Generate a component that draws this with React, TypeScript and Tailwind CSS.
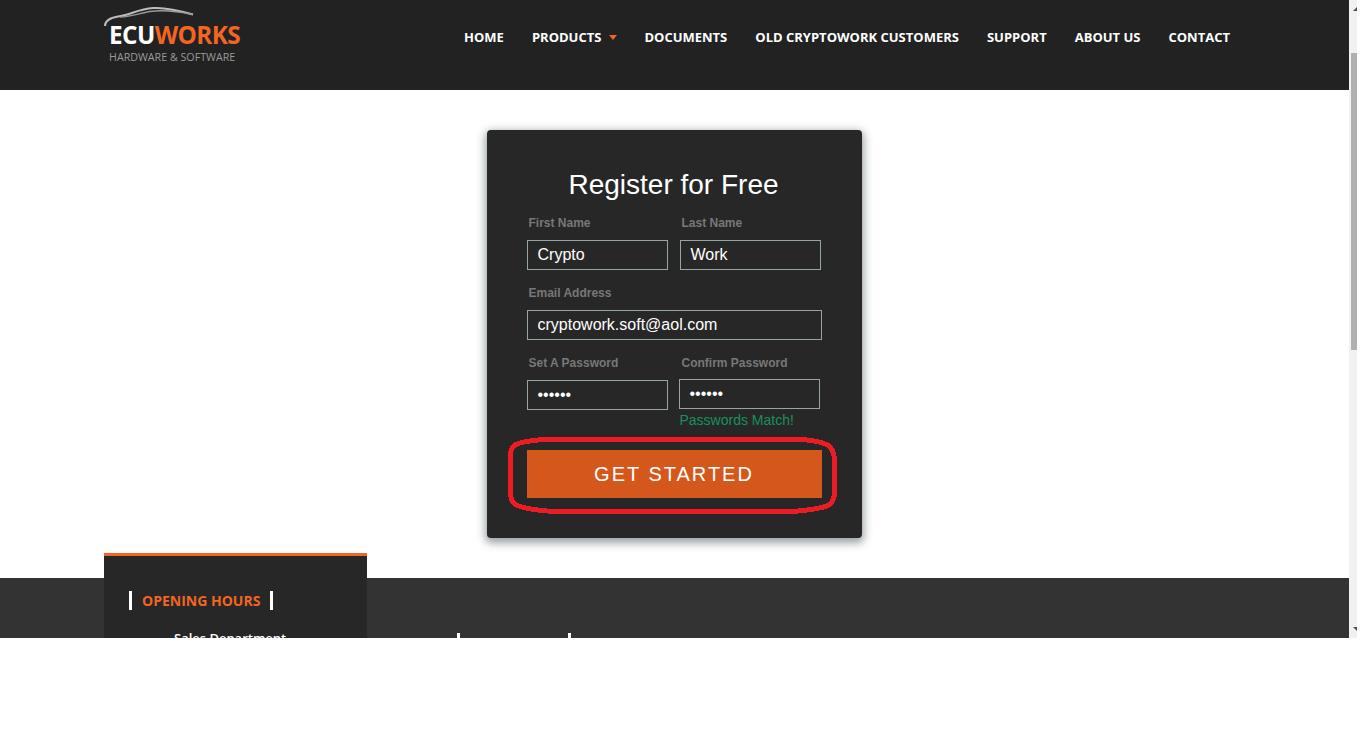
const navItems = ["HOME", "PRODUCTS", "DOCUMENTS", "OLD CRYPTOWORK CUSTOMERS", "SUPPORT", "ABOUT US", "CONTACT"];

const Field = ({ label, value, className = "" }: { label: string; value: string; className?: string }) => (
  <div className={className}>
    <p className="pl-[2px] h-[14px] text-[12px] leading-[14px] font-bold text-[#787878]">{label}</p>
    <div className="mt-[10px] h-[30px] border border-[#94a5a2] pl-[10px] text-[16px] leading-[28px] text-white">{value}</div>
  </div>
);

const Logo = () => (
  <div className="relative w-[140px] h-[64px] font-['Open_Sans',sans-serif]">
    <svg className="absolute left-0 top-0" width="100" height="22" viewBox="104 6 100 22" fill="none">
      <path d="M105 26 C105 21 109 18 118 16.5 C130 15 138 9 153 8 C167 7 181 11 193 14.5" stroke="#bdbdbd" strokeWidth="2" />
      <path d="M120 17 C132 17 140 13 150 11.5 C162 10 176 11 193 14.5" stroke="#9a9a9a" strokeWidth="1.5" />
    </svg>
    <div className="absolute left-[5px] top-[18px] h-[22px] text-[24.3px] leading-[22px] font-bold tracking-[-0.6px] whitespace-nowrap">
      <span className="text-white">ECU</span>
      <span className="text-[#f26522]">WORKS</span>
    </div>
    <div className="absolute left-[5px] top-[45px] text-[10.7px] leading-[12px] text-[#9a9a9a] whitespace-nowrap">HARDWARE &amp; SOFTWARE</div>
  </div>
);

const App = () => {
  return (
    <div className="w-[1369px] h-[742px] bg-white overflow-hidden font-['Liberation_Sans',Arial,sans-serif]">
      <div className="flex w-[1357px] h-[638px] overflow-hidden">
        <div className="w-[1349px] flex flex-col">
          <header className="h-[90px] shrink-0 bg-[#222222] flex justify-between pl-[104px] pr-[119px]">
            <div className="pt-[6px]">
              <Logo />
            </div>
            <nav className="flex gap-[28px] pt-[28px] h-[46px] font-['Open_Sans',sans-serif] text-[13px] leading-[18px] font-bold text-white">
              {navItems.map((item) => (
                <a key={item} className="flex items-center whitespace-nowrap">
                  {item}
                  {item === "PRODUCTS" && (
                    <span className="ml-[8px] mr-[-1px] mt-[1px] w-0 h-0 border-x-[4px] border-x-transparent border-t-[5px] border-t-[#f26522]" />
                  )}
                </a>
              ))}
            </nav>
          </header>

          <main className="h-[488px] shrink-0 pt-[40px] flex justify-center">
            <div className="relative w-[375px] h-[408px] ml-[-1px] rounded-[4px] bg-[#272727] pt-[38px] pl-[40px] shadow-[0_3px_8px_2px_rgba(70,85,90,0.55)]">
              <h1 className="w-[294px] text-center text-[28px] leading-[34px] text-white">Register for Free</h1>
              <div className="mt-[14px] flex gap-[12px]">
                <Field label="First Name" value="Crypto" className="w-[141px]" />
                <Field label="Last Name" value="Work" className="w-[141px]" />
              </div>
              <Field label="Email Address" value="cryptowork.soft@aol.com" className="mt-[16px] w-[295px]" />
              <div className="mt-[16px] flex gap-[11px]">
                <Field label="Set A Password" value="••••••" className="w-[141px]" />
                <div className="w-[141px]">
                  <p className="pl-[3px] h-[14px] text-[12px] leading-[14px] font-bold text-[#787878]">Confirm Password</p>
                  <div className="mt-[9px] h-[30px] border border-[#94a5a2] pl-[10px] text-[16px] leading-[28px] text-white">••••••</div>
                  <p className="mt-[3px] pl-[1px] text-[14px] leading-[16px] text-[#1a8f5f]">Passwords Match!</p>
                </div>
              </div>
              <button className="block mt-[22px] w-[295px] h-[48px] bg-[#d4581b] text-[20px] tracking-[2px] text-white">GET STARTED</button>
              <svg className="absolute left-[21px] top-[306px]" width="330" height="80" viewBox="0 0 330 80" fill="none" shapeRendering="crispEdges">
                <path d="M42 3 C90 3 240 3 287 3 C305 4 318 7 322 11 C325 14 326.5 18 326.5 26 L326.5 55 C326.5 62 325 66 321 69 C314 73 300 74 285 75.5 C240 76 90 76 45 75.5 C25 74 10 71 5.5 67 C3 64 2.5 60 2.5 55 L2.5 22 C2.5 15 3 12 7 9 C13 5.5 27 4 42 3 Z" stroke="#ed1c24" strokeWidth="5" />
              </svg>
            </div>
          </main>

          <footer className="flex-1 bg-[#333333] pl-[104px] flex">
            <div className="w-[263px] h-[120px] mt-[-25px] shrink-0 border-t-[3px] border-[#f26522] bg-[#272727] pt-[35px] pl-[25px] font-['Open_Sans',sans-serif]">
              <div className="flex items-center gap-[10px] h-[19px]">
                <span className="w-[3px] h-[19px] bg-white" />
                <span className="text-[14px] leading-[19px] font-bold text-[#f26522]">OPENING HOURS</span>
                <span className="w-[3px] h-[19px] bg-white" />
              </div>
              <p className="mt-[19px] pl-[45px] text-[13px] leading-[19px] font-semibold text-white whitespace-nowrap">Sales Department</p>
            </div>
            <div className="ml-[90px] mt-[55px] flex gap-[108px]">
              <span className="w-[3px] h-[19px] bg-white" />
              <span className="w-[3px] h-[19px] bg-white" />
            </div>
          </footer>
        </div>

        <div className="w-[8px] h-full bg-[#f1f1f1] flex flex-col overflow-hidden">
          <svg className="shrink-0 mt-[7px]" width="8" height="4" viewBox="0 0 8 4">
            <path d="M8 0 V4 H4 Z" fill="#505050" />
          </svg>
          <div className="mt-[42px] ml-[2px] w-[6px] h-[297px] bg-[#b0b0b0] shrink-0" />
          <svg className="shrink-0 mt-[277px]" width="8" height="4" viewBox="0 0 8 4">
            <path d="M4 0 H8 V4 Z" fill="#505050" />
          </svg>
        </div>
      </div>
    </div>
  );
};

export default App;
